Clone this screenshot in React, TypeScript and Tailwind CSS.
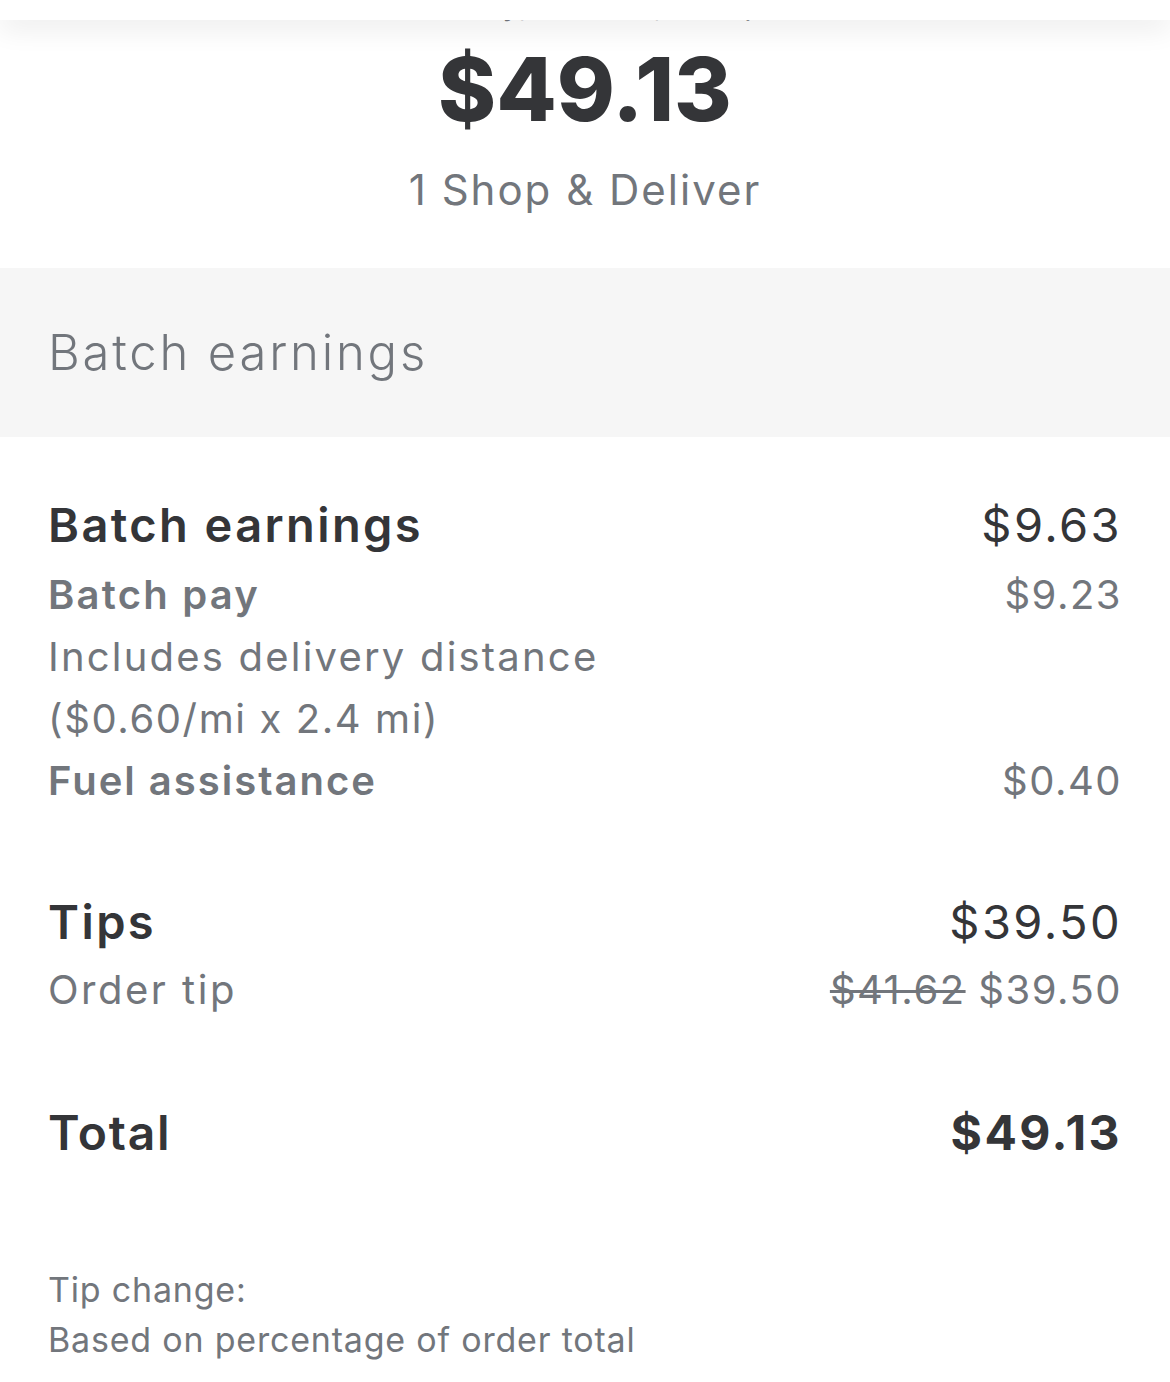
const dark = "text-[#343538]";
const gray = "text-[#72767c]";

function Row({
  label,
  value,
  labelClass,
  valueClass,
  className = "",
}: {
  label: React.ReactNode;
  value?: React.ReactNode;
  labelClass: string;
  valueClass?: string;
  className?: string;
}) {
  return (
    <div className={`flex justify-between items-center ${className}`}>
      <span className={labelClass}>{label}</span>
      {value && <span className={valueClass}>{value}</span>}
    </div>
  );
}

export default function App() {
  const font = { fontFamily: "Inter, 'Noto Sans', sans-serif" };
  return (
    <div
      className="relative w-[1170px] h-[1382px] overflow-hidden bg-white"
      style={font}
    >
      {/* top bar sitting over the scrolled content */}
      <div className="absolute inset-x-0 top-0 z-10 h-[20px] bg-white shadow-[0_8px_28px_rgba(0,0,0,0.09)]"></div>

      <section className="h-[268px] flex flex-col items-center">
        <div className={`mt-[-14px] h-[36px] text-[30px] leading-[36px] tracking-[1px] ${gray}`}>
          Thursday, June 13, 2:41 pm
        </div>
        <div
          className={`mt-[15px] text-[88px] leading-[104px] font-extrabold ${dark}`}
        >
          $49.13
        </div>
        <div className={`mt-[21px] text-[42px] leading-[56px] tracking-[2px] ${gray}`}>
          1 Shop &amp; Deliver
        </div>
      </section>

      <section className="h-[169px] bg-[#f6f6f6] px-[48px] flex items-center">
        <h2 className={`text-[49px] font-light tracking-[2.8px] ${gray}`}>Batch earnings</h2>
      </section>

      <div className="pl-[48px] pr-[48px]">
        <div className="pt-[53px]">
          <Row
            className="h-[70px]"
            label="Batch earnings"
            value="$9.63"
            labelClass={`text-[47px] font-semibold tracking-[2.4px] ${dark}`}
            valueClass={`text-[47px] tracking-[2.4px] ${dark}`}
          />
          <Row
            className="mt-[4px] h-[62px]"
            label="Batch pay"
            value="$9.23"
            labelClass={`text-[40px] font-semibold tracking-[2.2px] ${gray}`}
            valueClass={`text-[40px] tracking-[1.5px] ${gray}`}
          />
          <Row
            className="h-[62px]"
            label="Includes delivery distance"
            labelClass={`text-[40px] tracking-[2.2px] ${gray}`}
          />
          <Row
            className="h-[62px]"
            label="($0.60/mi x 2.4 mi)"
            labelClass={`text-[40px] tracking-[1.6px] ${gray}`}
          />
          <Row
            className="h-[62px]"
            label="Fuel assistance"
            value="$0.40"
            labelClass={`text-[40px] font-semibold tracking-[2px] ${gray}`}
            valueClass={`text-[40px] tracking-[1.5px] ${gray}`}
          />
        </div>

        <div className="pt-[75px]">
          <Row
            className="h-[70px]"
            label="Tips"
            value="$39.50"
            labelClass={`text-[47px] font-semibold tracking-[2.4px] ${dark}`}
            valueClass={`text-[47px] tracking-[2.4px] ${dark}`}
          />
          <Row
            className="mt-[2px] h-[62px]"
            label="Order tip"
            value={
              <>
                <span className="line-through decoration-[3px]">$41.62</span>{" "}
                $39.50
              </>
            }
            labelClass={`text-[40px] tracking-[2.5px] ${gray}`}
            valueClass={`text-[40px] tracking-[1.5px] ${gray}`}
          />
        </div>

        <div className="pt-[77px]">
          <Row
            className="h-[70px]"
            label="Total"
            value="$49.13"
            labelClass={`text-[48px] font-semibold tracking-[1.8px] ${dark}`}
            valueClass={`text-[48px] font-bold tracking-[2.4px] ${dark}`}
          />
        </div>

        <div className={`pt-[97px] text-[34px] leading-[50px] tracking-[0.8px] ${gray}`}>
          <p>Tip change:</p>
          <p>Based on percentage of order total</p>
        </div>
      </div>
    </div>
  );
}
